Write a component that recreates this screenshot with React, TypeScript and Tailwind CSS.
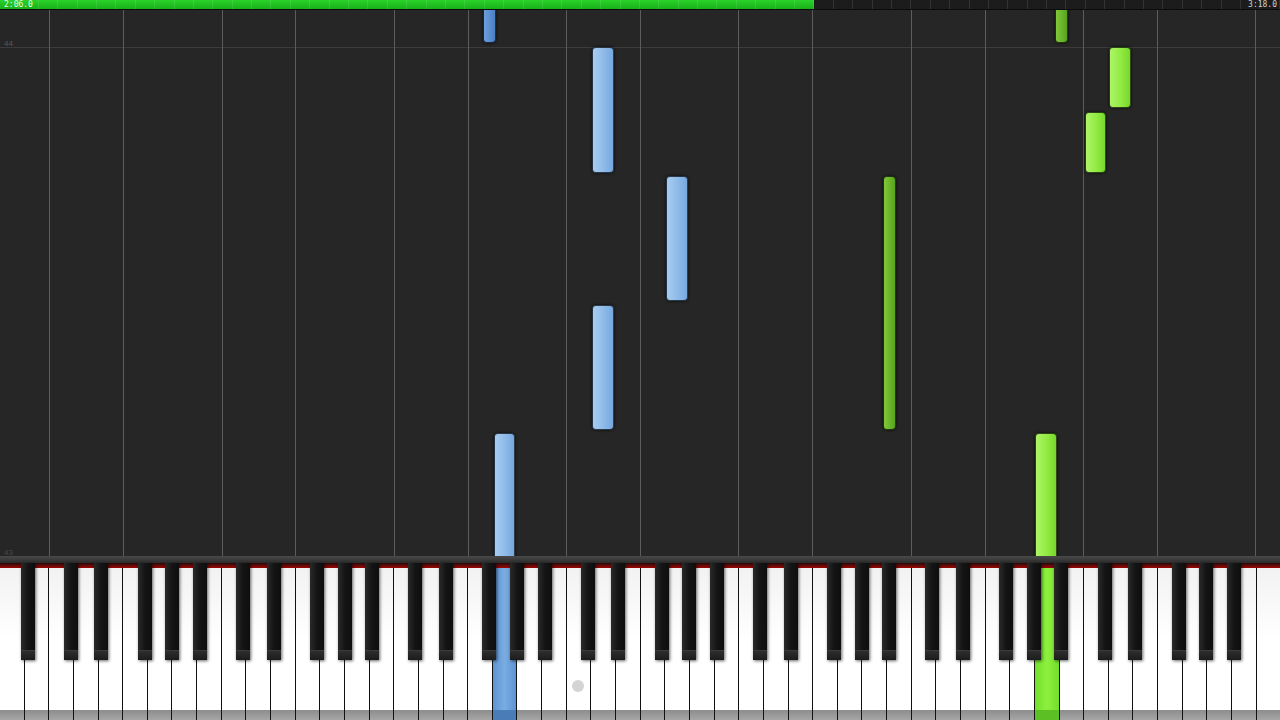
import React from "react"

const WHITE_COUNT = 52
const KEY_W = 1280 / WHITE_COUNT

// 88 keys, A0..C8. letters of white keys starting at A
const LETTERS = ["A", "B", "C", "D", "E", "F", "G"]

// black key after a white key letter, and its offset from the boundary
const BLACK_OFFSET: Record<string, number> = { C: -3, D: 3, F: -3, G: 0, A: 3 }

type Note = {
  key: number // white key index, or boundary index for black keys
  black?: boolean
  top: number
  bottom: number
  color: "blue" | "green"
}

// page y values, roll starts at y=10
const notes: Note[] = [
  { key: 20, black: true, top: 0, bottom: 43, color: "blue" },
  { key: 24, top: 47, bottom: 173, color: "blue" },
  { key: 27, top: 176, bottom: 301, color: "blue" },
  { key: 24, top: 305, bottom: 430, color: "blue" },
  { key: 20, top: 433, bottom: 560, color: "blue" },
  { key: 43, black: true, top: 0, bottom: 43, color: "green" },
  { key: 45, top: 47, bottom: 108, color: "green" },
  { key: 44, top: 112, bottom: 173, color: "green" },
  { key: 36, black: true, top: 176, bottom: 430, color: "green" },
  { key: 42, top: 433, bottom: 560, color: "green" },
]

const pressed: Record<number, "blue" | "green"> = { 20: "blue", 42: "green" }

function blackKeys() {
  const out: { x: number; boundary: number }[] = []
  for (let i = 0; i < WHITE_COUNT - 1; i++) {
    const letter = LETTERS[i % 7]
    if (letter in BLACK_OFFSET) {
      const boundary = i + 1
      out.push({ boundary, x: boundary * KEY_W + BLACK_OFFSET[letter] })
    }
  }
  return out
}

const BLACKS = blackKeys()
const gridLines = Array.from({ length: WHITE_COUNT }, (_, i) => i).filter(
  (i) => LETTERS[i % 7] === "C" || LETTERS[i % 7] === "F",
)

function blackCenter(boundary: number) {
  const b = BLACKS.find((k) => k.boundary === boundary)
  return b ? b.x : boundary * KEY_W
}

function ProgressBar() {
  return (
    <div className="relative h-[10px] shrink-0 bg-[#1c1c1c] border-b border-[#0c0c0c] overflow-hidden">
      <div className="absolute left-0 top-0 h-full w-[814px] bg-gradient-to-b from-[#2ad22a] to-[#18b018]" />
      <div className="absolute inset-0 flex">
        {Array.from({ length: 66 }).map((_, i) => (
          <div key={i} className="flex-1 border-r border-white/10" />
        ))}
      </div>
      <span
        className="absolute left-[4px] top-0 text-[8px] leading-[9px] text-[#e4ffe4]"
        style={{ fontFamily: '"DejaVu Sans Mono", monospace' }}
      >
        2:06.0
      </span>
      <span
        className="absolute right-[3px] top-0 text-[8px] leading-[9px] text-[#d0d0d0]"
        style={{ fontFamily: '"DejaVu Sans Mono", monospace' }}
      >
        3:18.0
      </span>
    </div>
  )
}

function NoteBar({ n }: { n: Note }) {
  let left: number
  let width: number
  if (n.black) {
    const c = blackCenter(n.key)
    left = c - 6.5
    width = 13
  } else {
    left = n.key * KEY_W + 1.5
    width = KEY_W - 3
  }
  const cls =
    n.color === "blue"
      ? n.black
        ? "bg-gradient-to-r from-[#6c9edc] to-[#4a80c6]"
        : "bg-gradient-to-r from-[#a8ccf0] via-[#90bce9] to-[#76a8e0]"
      : n.black
        ? "bg-gradient-to-r from-[#80c838] to-[#56a41e]"
        : "bg-gradient-to-r from-[#aef466] via-[#94ec44] to-[#78d82a]"
  return (
    <div
      className={`absolute rounded-[4px] border border-black/70 shadow-[0_0_3px_rgba(0,0,0,0.8)] ${cls}`}
      style={{ left, width, top: n.top - 10, height: n.bottom - n.top }}
    />
  )
}

function Roll() {
  return (
    <div className="relative flex-1 bg-[#262626] overflow-hidden">
      <div className="absolute left-0 right-0 top-[37px] h-px bg-[#3c3c3c]" />
      <span className="absolute left-[4px] top-[28px] text-[8px] text-[#5a5a5a]" style={{ fontFamily: '"Liberation Sans", sans-serif' }}>
        44
      </span>
      <span className="absolute left-[4px] bottom-[-3px] text-[8px] text-[#4a4a4a]" style={{ fontFamily: '"Liberation Sans", sans-serif' }}>
        43
      </span>
      {gridLines.map((i) => (
        <div key={i} className="absolute top-0 bottom-0 w-px bg-[#5c5c5c]" style={{ left: Math.round(i * KEY_W) }} />
      ))}
      {notes.map((n, i) => (
        <NoteBar key={i} n={n} />
      ))}
    </div>
  )
}

function Keyboard() {
  return (
    <div className="relative h-[164px] shrink-0 flex flex-col">
      <div className="h-[7px] bg-gradient-to-b from-[#4a4a4a] to-[#2c2c2c]" />
      <div className="h-[5px] bg-gradient-to-b from-[#2a0808] to-[#a00000]" />
      <div className="flex flex-1">
        {Array.from({ length: WHITE_COUNT }).map((_, i) => {
          const p = pressed[i]
          return (
            <div key={i} className="flex-1 flex flex-col border-r border-[#111] last:border-r-0">
              <div
                className={
                  p === "blue"
                    ? "flex-1 bg-gradient-to-r from-[#5e94d4] via-[#7aace2] to-[#5e94d4]"
                    : p === "green"
                      ? "flex-1 bg-gradient-to-r from-[#72e02a] via-[#8ef03e] to-[#72e02a]"
                      : "flex-1 bg-gradient-to-b from-[#f2f2f2] via-white to-white"
                }
              />
              <div
                className={
                  p === "blue" ? "h-[10px] bg-[#4a7cb8]" : p === "green" ? "h-[10px] bg-[#5cc024]" : "h-[10px] bg-gradient-to-b from-[#8c8c8c] to-[#a6a6a6]"
                }
              />
            </div>
          )
        })}
      </div>
      <div className="absolute left-[572px] top-[124px] w-[12px] h-[12px] rounded-full bg-[#d4d4d4]" />
      {BLACKS.map((b) => (
        <div
          key={b.boundary}
          className="absolute top-[7px] h-[97px] w-[14px] flex flex-col bg-[#121212] shadow-[1px_1px_3px_rgba(0,0,0,0.6)]"
          style={{ left: b.x - 7 }}
        >
          <div className="flex-1 bg-gradient-to-r from-[#2a2a2a] via-[#141414] to-[#0e0e0e]" />
          <div className="h-[10px] border-t border-[#3a3a3a] bg-gradient-to-b from-[#2e2e2e] to-[#1c1c1c]" />
        </div>
      ))}
    </div>
  )
}

export default function App() {
  return (
    <div className="w-[1280px] h-[720px] flex flex-col bg-[#262626] overflow-hidden">
      <ProgressBar />
      <Roll />
      <Keyboard />
    </div>
  )
}
